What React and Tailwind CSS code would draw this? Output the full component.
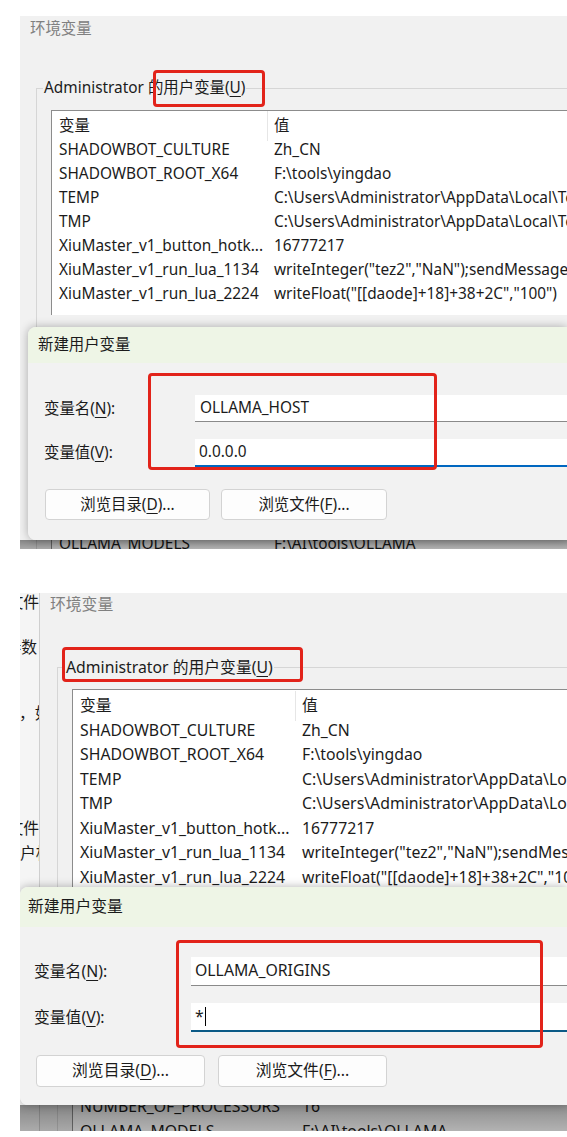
import React from "react";

function U({ children }) {
  return <span className="underline underline-offset-[3px] decoration-1">{children}</span>;
}

const userRows = [
  ["SHADOWBOT_CULTURE", "Zh_CN"],
  ["SHADOWBOT_ROOT_X64", "F:\\tools\\yingdao"],
  ["TEMP", "C:\\Users\\Administrator\\AppData\\Local\\Temp"],
  ["TMP", "C:\\Users\\Administrator\\AppData\\Local\\Temp"],
  ["XiuMaster_v1_button_hotk...", "16777217"],
  ["XiuMaster_v1_run_lua_1134", 'writeInteger("tez2","NaN");sendMessage("")'],
  ["XiuMaster_v1_run_lua_2224", 'writeFloat("[[daode]+18]+38+2C","100")'],
];

const sysRows = [
  ["ComSpec", "C:\\Windows\\system32\\cmd.exe"],
  ["DriverData", "C:\\Windows\\System32\\Drivers\\DriverData"],
  ["JAVA_HOME", "C:\\Program Files\\Java\\jdk"],
  ["NUMBER_OF_PROCESSORS", "16"],
  ["OLLAMA_MODELS", "F:\\AI\\tools\\OLLAMA"],
  ["OS", "Windows_NT"],
];

function Rows1({ rows }) {
  return rows.map(([n, v]) => (
    <div key={n} className="flex h-[24px] items-center whitespace-nowrap">
      <div className="w-[216px] shrink-0 pl-[7px]">{n}</div>
      <div className="pl-[6px]">{v}</div>
    </div>
  ));
}

function Rows2({ rows }) {
  return rows.map(([n, v]) => (
    <div key={n} className="flex h-[24.5px] items-center whitespace-nowrap">
      <div className="w-[223px] shrink-0 pl-[7px]">{n}</div>
      <div className="pl-[6px]">{v}</div>
    </div>
  ));
}

function Panel1() {
  return (
    <div className="relative ml-[20px] mt-[16px] h-[533px] overflow-hidden bg-[#f1f1f1] text-[15.4px] text-[#1b1b1b]">
      <div className="flex h-[26px] items-center pl-[10px] text-[#808080]">环境变量</div>
      <fieldset className="ml-[16px] mt-[36px] border-l border-t border-[#d6d6d6]">
        <legend className="ml-[6px] h-[20px] px-[1px] leading-[20px]">
          Administrator 的用户变量(<U>U</U>)
        </legend>
        <div className="ml-[14px] mt-[12px] h-[205px] overflow-hidden border-l border-t border-[#8c8c8c] bg-white pt-[3px]">
          <div className="flex h-[24px] items-center whitespace-nowrap">
            <div className="flex h-[30px] w-[216px] shrink-0 items-center border-r border-[#e6e6e6] pl-[7px]">变量</div>
            <div className="pl-[6px]">值</div>
          </div>
          <Rows1 rows={userRows} />
        </div>
        <div className="h-[44px]" />
      </fieldset>
      <fieldset className="ml-[16px] mt-[8px] border-l border-t border-[#d6d6d6]">
        <legend className="ml-[6px] h-[20px] px-[1px] leading-[20px]">系统变量(<U>S</U>)</legend>
        <div className="ml-[14px] mt-[21px] h-[220px] overflow-hidden border-l border-t border-[#8c8c8c] bg-white pt-[3px]">
          <div className="flex h-[24px] items-center whitespace-nowrap">
            <div className="w-[216px] shrink-0 border-r border-[#e6e6e6] pl-[7px]">变量</div>
            <div className="pl-[6px]">值</div>
          </div>
          <Rows1 rows={sysRows} />
        </div>
      </fieldset>

      <div className="absolute bottom-0 left-0 right-0 top-[524px] bg-gradient-to-b from-black/45 to-black/30" />

      <div className="absolute left-[8px] right-0 top-[311px] h-[213px] overflow-hidden rounded-l-[8px] shadow-[0_0_10px_rgba(0,0,0,0.3)]">
        <div className="flex h-[36px] items-center bg-[#eef5e6] pl-[10px]">新建用户变量</div>
        <div className="h-[177px] bg-[#f2f2f2] pt-[32px]">
          <div className="flex h-[27px]">
            <div className="flex w-[167px] shrink-0 items-center pl-[16px]">变量名(<U>N</U>):</div>
            <div className="flex flex-1 items-center border-b border-[#8a8a8a] bg-white pl-[5px]">OLLAMA_HOST</div>
          </div>
          <div className="mt-[17px] flex h-[28px]">
            <div className="flex w-[167px] shrink-0 items-center pl-[16px]">变量值(<U>V</U>):</div>
            <div className="flex flex-1 items-center border-b-2 border-[#0067c0] bg-white pl-[4px]">0.0.0.0</div>
          </div>
          <div className="mt-[22px] flex gap-[11px] pl-[17px]">
            <div className="flex h-[31px] w-[165px] items-center justify-center rounded-[4px] border border-[#d3d3d3] bg-[#fdfdfd]">
              浏览目录(<U>D</U>)...
            </div>
            <div className="flex h-[31px] w-[166px] items-center justify-center rounded-[4px] border border-[#d3d3d3] bg-[#fdfdfd]">
              浏览文件(<U>F</U>)...
            </div>
          </div>
        </div>
      </div>

      <div className="absolute left-[133px] top-[54px] h-[37px] w-[112px] rounded-[4px] border-[3px] border-[#e2231a]" />
      <div className="absolute left-[128px] top-[357px] h-[97px] w-[289px] rounded-[4px] border-[3px] border-[#e2231a]" />
    </div>
  );
}

function Panel2() {
  return (
    <div className="relative ml-[20px] mt-[44px] flex h-[538px] overflow-hidden text-[15.8px] text-[#1b1b1b]">
      <div className="flex w-[20px] shrink-0 flex-col overflow-hidden border-r border-[#cfcfcf] bg-[#f5f5f5]">
        <div className="-mt-[1px] flex h-[20px] justify-end whitespace-nowrap leading-[20px]">文件</div>
        <div className="mt-[25px] flex h-[20px] justify-end whitespace-nowrap pr-[2px] leading-[20px]">参数</div>
        <div className="-ml-[1px] mt-[46px] h-[20px] whitespace-nowrap leading-[20px]">，如果</div>
        <div className="mt-[95px] flex h-[20px] justify-end whitespace-nowrap leading-[20px]">文件</div>
        <div className="mt-[5px] h-[20px] whitespace-nowrap leading-[20px]">户相</div>
      </div>

      <div className="flex-1 overflow-hidden bg-[#f1f1f1]">
        <div className="flex h-[24px] items-center pl-[10px] text-[#808080]">环境变量</div>
        <fieldset className="ml-[17px] mt-[40px] border-l border-t border-[#d6d6d6]">
          <legend className="ml-[7px] h-[20px] px-[1px] leading-[20px]">
            Administrator 的用户变量(<U>U</U>)
          </legend>
          <div className="ml-[14px] mt-[12px] h-[210px] overflow-hidden border-l border-t border-[#8c8c8c] bg-white pt-[4px]">
            <div className="flex h-[24.5px] items-center whitespace-nowrap">
              <div className="flex h-[30px] w-[223px] shrink-0 items-center border-r border-[#e6e6e6] pl-[7px]">变量</div>
              <div className="pl-[6px]">值</div>
            </div>
            <Rows2 rows={userRows} />
          </div>
          <div className="h-[44px]" />
        </fieldset>
        <fieldset className="ml-[17px] mt-[8px] border-l border-t border-[#d6d6d6]">
          <legend className="ml-[7px] h-[20px] px-[1px] leading-[20px]">系统变量(<U>S</U>)</legend>
          <div className="ml-[14px] mt-[21px] h-[220px] overflow-hidden border-l border-t border-[#8c8c8c] bg-white pt-[4px]">
            <div className="flex h-[24.5px] items-center whitespace-nowrap">
              <div className="w-[223px] shrink-0 border-r border-[#e6e6e6] pl-[7px]">变量</div>
              <div className="pl-[6px]">值</div>
            </div>
            <Rows2 rows={sysRows} />
          </div>
        </fieldset>
      </div>

      <div className="absolute bottom-0 left-0 right-0 top-[512px] bg-gradient-to-b from-black/45 to-black/30" />

      <div className="absolute left-0 right-0 top-[294px] h-[218px] overflow-hidden rounded-l-[8px] shadow-[0_0_10px_rgba(0,0,0,0.3)]">
        <div className="flex h-[40px] items-center bg-[#eef5e6] pl-[8px]">新建用户变量</div>
        <div className="h-[178px] bg-[#f2f2f2] pt-[30px]">
          <div className="flex h-[29px]">
            <div className="flex w-[171px] shrink-0 items-center pl-[14px]">变量名(<U>N</U>):</div>
            <div className="flex flex-1 items-center border-b border-[#8a8a8a] bg-white pl-[4px]">OLLAMA_ORIGINS</div>
          </div>
          <div className="mt-[17px] flex h-[29px]">
            <div className="flex w-[171px] shrink-0 items-center pl-[14px]">变量值(<U>V</U>):</div>
            <div className="flex flex-1 items-center border-b-2 border-[#0b5a86] bg-white pl-[4px]">
              <span>*</span>
              <span className="ml-[1px] h-[19px] w-[1px] bg-black" />
            </div>
          </div>
          <div className="mt-[23px] flex gap-[13px] pl-[16px]">
            <div className="flex h-[32px] w-[169px] items-center justify-center rounded-[4px] border border-[#d3d3d3] bg-[#fdfdfd]">
              浏览目录(<U>D</U>)...
            </div>
            <div className="flex h-[32px] w-[169px] items-center justify-center rounded-[4px] border border-[#d3d3d3] bg-[#fdfdfd]">
              浏览文件(<U>F</U>)...
            </div>
          </div>
        </div>
      </div>

      <div className="absolute left-[42px] top-[54px] h-[35px] w-[241px] rounded-[4px] border-[3px] border-[#e2231a]" />
      <div className="absolute left-[156px] top-[347px] h-[108px] w-[367px] rounded-[4px] border-[3px] border-[#e2231a]" />
    </div>
  );
}

export default function App() {
  return (
    <div className="h-[1137px] w-[567px] overflow-hidden bg-white font-[Noto_Sans,Noto_Sans_CJK_SC,sans-serif]">
      <Panel1 />
      <Panel2 />
    </div>
  );
}
